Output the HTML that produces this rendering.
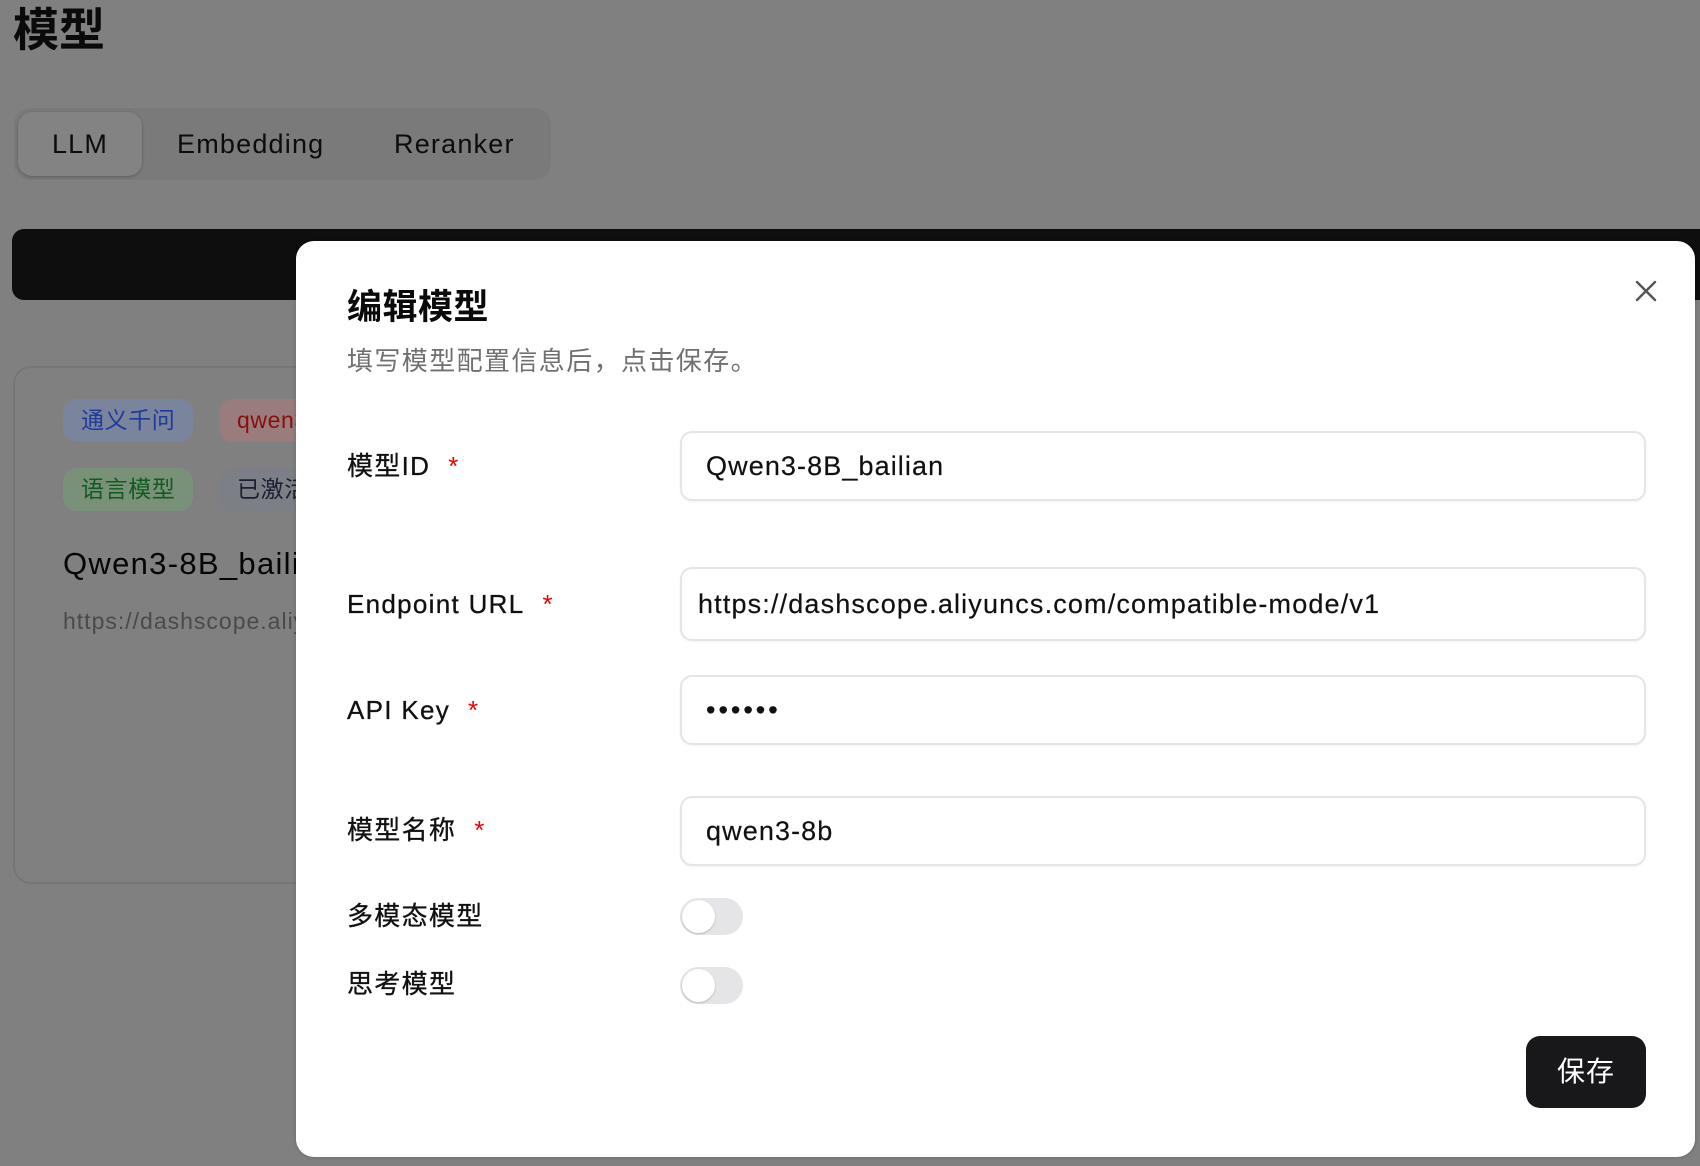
<!DOCTYPE html>
<html><head><meta charset="utf-8"><style>
*{box-sizing:border-box;margin:0;padding:0}
body{width:1700px;height:1166px;overflow:hidden;background:#808080;font-family:"Liberation Sans","Noto Sans CJK SC",sans-serif;position:relative;color:#111}
.abs{position:absolute}
h1{position:absolute;left:13px;top:4px;font-size:46px;font-weight:bold;color:#0a0a0a;line-height:52px}
.tabs{left:14px;top:108px;width:537px;height:72px;background:#7a7a7a;border-radius:16px}
.tab{position:absolute;top:4px;height:64px;line-height:64px;font-size:27px;color:#0c0c0c;letter-spacing:1.2px}
.tab.on{left:4px;width:124px;background:#838383;border-radius:14px;text-align:center;box-shadow:0 1px 3px rgba(0,0,0,.25)}
.bar{left:12px;top:229px;width:1700px;height:71px;background:#0e0e0e;border-radius:12px}
.card{left:13px;top:366px;width:400px;height:518px;border:2px solid #767676;border-radius:18px;background:#808080}
.tag{position:absolute;height:43px;line-height:43px;border-radius:14px;font-size:23px;padding:0 18px;letter-spacing:.6px}
.modal{left:296px;top:241px;width:1399px;height:916px;background:#fff;border-radius:18px;box-shadow:0 0 4px rgba(0,0,0,.2)}
.lbl{position:absolute;left:51px;font-size:26px;color:#111;line-height:30px;letter-spacing:1.3px;-webkit-text-stroke:.3px #111}
.lbl b{color:#e00;font-weight:normal;margin-left:18px;-webkit-text-stroke:0}
.inp{position:absolute;left:384px;width:966px;border:2px solid #e3e5ea;border-radius:12px;font-size:27px;color:#111;box-shadow:0 1px 2px rgba(0,0,0,.05);letter-spacing:1.1px;-webkit-text-stroke:.2px #111}
.tg{position:absolute;left:384px;width:63px;height:37px;border-radius:19px;background:#e5e5e7}
.tg i{position:absolute;left:2px;top:2px;width:33px;height:33px;border-radius:50%;background:#fff;box-shadow:0 1px 2px rgba(0,0,0,.2)}
</style></head><body>
<h1>模型</h1>
<div class="abs tabs"><div class="tab on">LLM</div><div class="tab" style="left:163px">Embedding</div><div class="tab" style="left:380px">Reranker</div></div>
<div class="abs bar"></div>
<div class="abs card">
<div class="tag" style="left:48px;top:31px;background:#7a849c;color:#1e3a9a">通义千问</div>
<div class="tag" style="left:204px;top:31px;background:#9a7c7c;color:#8a0e0e">qwen3</div>
<div class="tag" style="left:48px;top:100px;background:#799179;color:#135a20">语言模型</div>
<div class="tag" style="left:204px;top:100px;background:#7c7f86;color:#1a2030">已激活</div>
<div class="abs" style="left:48px;top:178px;font-size:31px;color:#050505;white-space:nowrap;letter-spacing:1.3px">Qwen3-8B_bailian</div>
<div class="abs" style="left:48px;top:240px;font-size:23px;color:#4a4a4a;white-space:nowrap;letter-spacing:1px">https://dashscope.aliyuncs.com</div>
</div>
<div class="abs modal">
<div class="abs" style="left:51px;top:45px;font-size:35px;font-weight:bold;color:#0a0a0a;line-height:44px;letter-spacing:.5px">编辑模型</div>
<div class="abs" style="left:51px;top:104px;font-size:26px;color:#707070;line-height:32px;letter-spacing:1.4px">填写模型配置信息后，点击保存。</div>
<svg class="abs" style="left:1339px;top:39px" width="22" height="22" viewBox="0 0 22 22"><path d="M2 2L20 20M20 2L2 20" stroke="#555" stroke-width="2.4" stroke-linecap="round"/></svg>
<div class="lbl" style="top:210px">模型ID<b>*</b></div>
<div class="inp" style="top:190px;height:70px;line-height:66px;padding-left:24px">Qwen3-8B_bailian</div>
<div class="lbl" style="top:348px">Endpoint URL<b>*</b></div>
<div class="inp" style="top:326px;height:74px;line-height:70px;padding-left:16px;letter-spacing:1.15px">https://dashscope.aliyuncs.com/compatible-mode/v1</div>
<div class="lbl" style="top:454px">API Key<b>*</b></div>
<div class="inp" style="top:434px;height:70px;line-height:66px;padding-left:24px;letter-spacing:3px">••••••</div>
<div class="lbl" style="top:574px">模型名称<b>*</b></div>
<div class="inp" style="top:555px;height:70px;line-height:66px;padding-left:24px">qwen3-8b</div>
<div class="lbl" style="top:660px">多模态模型</div>
<div class="tg" style="top:657px"><i></i></div>
<div class="lbl" style="top:728px">思考模型</div>
<div class="tg" style="top:726px"><i></i></div>
<div class="abs" style="left:1230px;top:795px;width:120px;height:72px;background:#18181b;border-radius:14px;color:#fff;font-size:28px;line-height:72px;text-align:center;letter-spacing:1px">保存</div>
</div>
</body></html>
